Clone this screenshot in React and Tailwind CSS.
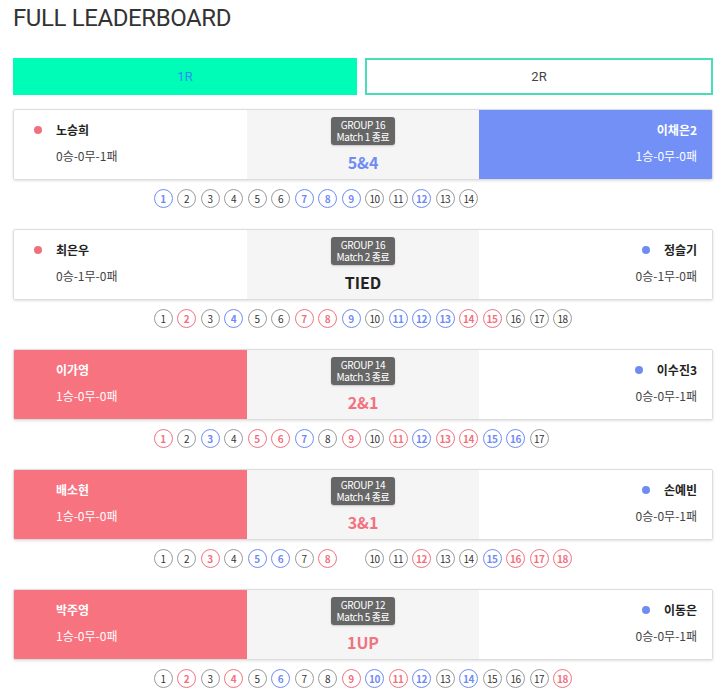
import React from 'react';

const matches = [
  {
    left: { name: '노승희', record: '0승-0무-1패' },
    right: { name: '이채은2', record: '1승-0무-0패' },
    winner: 'right',
    group: 'GROUP 16',
    match: 'Match 1 종료',
    score: '5&4',
    holes: 'bgggggbbbggbgg'.split(''),
  },
  {
    left: { name: '최은우', record: '0승-1무-0패' },
    right: { name: '정슬기', record: '0승-1무-0패' },
    winner: null,
    group: 'GROUP 16',
    match: 'Match 2 종료',
    score: 'TIED',
    holes: 'grgbggrrbgbbbrrggg'.split(''),
  },
  {
    left: { name: '이가영', record: '1승-0무-0패' },
    right: { name: '이수진3', record: '0승-0무-1패' },
    winner: 'left',
    group: 'GROUP 14',
    match: 'Match 3 종료',
    score: '2&1',
    holes: 'rgbgrrbgrgrbrrbbg'.split(''),
  },
  {
    left: { name: '배소현', record: '1승-0무-0패' },
    right: { name: '손예빈', record: '0승-0무-1패' },
    winner: 'left',
    group: 'GROUP 14',
    match: 'Match 4 종료',
    score: '3&1',
    holes: 'ggrgbbgrxggrggbrrr'.split(''),
  },
  {
    left: { name: '박주영', record: '1승-0무-0패' },
    right: { name: '이동은', record: '0승-0무-1패' },
    winner: 'left',
    group: 'GROUP 12',
    match: 'Match 5 종료',
    score: '1UP',
    holes: 'grgrgbggrbrbgbgggr'.split(''),
  },
];

const holeStyles = {
  g: 'border-[#9a9a9a] text-[#333]',
  r: 'border-[#f2727f] text-[#f2727f] font-bold',
  b: 'border-[#6f8cf5] text-[#6f8cf5] font-bold',
  x: 'invisible',
};

function Player({ player, side, winner }) {
  const isRight = side === 'right';
  const won = winner === side;
  const bg = won ? (isRight ? 'bg-[#7390f6]' : 'bg-[#f7737f]') : 'bg-white';
  const dot = isRight ? 'bg-[#6f8cf5]' : 'bg-[#f2707d]';
  return (
    <div className={`flex flex-col pt-[11px] ${isRight ? 'items-end pr-[15px]' : 'pl-[20px]'} ${bg}`}>
      <div className="flex items-center gap-[14px] h-[18px]">
        <span className={`w-[8px] h-[8px] rounded-full ${won ? 'invisible' : dot}`} />
        <span className={`text-[12px] font-bold ${won ? 'text-white' : 'text-[#222]'}`}>{player.name}</span>
      </div>
      <div className={`mt-[8px] text-[12px] ${won ? 'text-white' : 'text-[#444]'} ${isRight ? '' : 'pl-[22px]'}`}>
        {player.record}
      </div>
    </div>
  );
}

function MatchCard({ m }) {
  const scoreColor =
    m.winner === 'right' ? 'text-[#6f8cf5]' : m.winner === 'left' ? 'text-[#f2727f]' : 'text-[#222]';
  return (
    <div>
      <div className="grid grid-cols-3 h-[71px] border border-[#dcdcdc] rounded-[2px] shadow-[0_1px_3px_rgba(0,0,0,0.12)] overflow-hidden">
        <Player player={m.left} side="left" winner={m.winner} />
        <div className="flex flex-col items-center bg-[#f5f5f5] pt-[7px]">
          <div className="bg-[#666] rounded-[3px] px-[6px] py-[2px] text-white text-[10px] leading-[12px] text-center tracking-[-0.4px] shadow-[0_1px_2px_rgba(0,0,0,0.2)]">
            <div>{m.group}</div>
            <div>{m.match}</div>
          </div>
          <div className={`mt-[7px] text-[16px] font-bold leading-[20px] ${scoreColor}`}>{m.score}</div>
        </div>
        <Player player={m.right} side="right" winner={m.winner} />
      </div>
      <div className="flex justify-center mt-[9px] mb-[21px]">
        <div className="w-[419px] flex gap-[4.5px]">
          {m.holes.map((h, i) => (
            <span
              key={i}
              className={`w-[19px] h-[19px] rounded-full border flex items-center justify-center text-[10px] tracking-[-0.5px] ${holeStyles[h]}`}
            >
              {i + 1}
            </span>
          ))}
        </div>
      </div>
    </div>
  );
}

export default function App() {
  return (
    <div className="w-[726px] bg-white px-[13px] pt-[2px] font-['Noto_Sans_CJK_KR',sans-serif]">
      <h1 className="text-[24px] leading-[32px] text-[#333] font-['Roboto','Noto_Sans_CJK_KR',sans-serif] tracking-[-0.4px]">
        FULL LEADERBOARD
      </h1>
      <div className="flex gap-[8px] mt-[24px] mb-[14px]">
        <button className="flex-1 h-[37px] bg-[#00fdb7] text-[#2d8ff0] text-[13px] font-['Roboto',sans-serif]">1R</button>
        <button className="flex-1 h-[37px] bg-white border-2 border-[#47ddb6] text-[#444] text-[13px] font-['Roboto',sans-serif]">2R</button>
      </div>
      {matches.map((m, i) => (
        <MatchCard key={i} m={m} />
      ))}
    </div>
  );
}
